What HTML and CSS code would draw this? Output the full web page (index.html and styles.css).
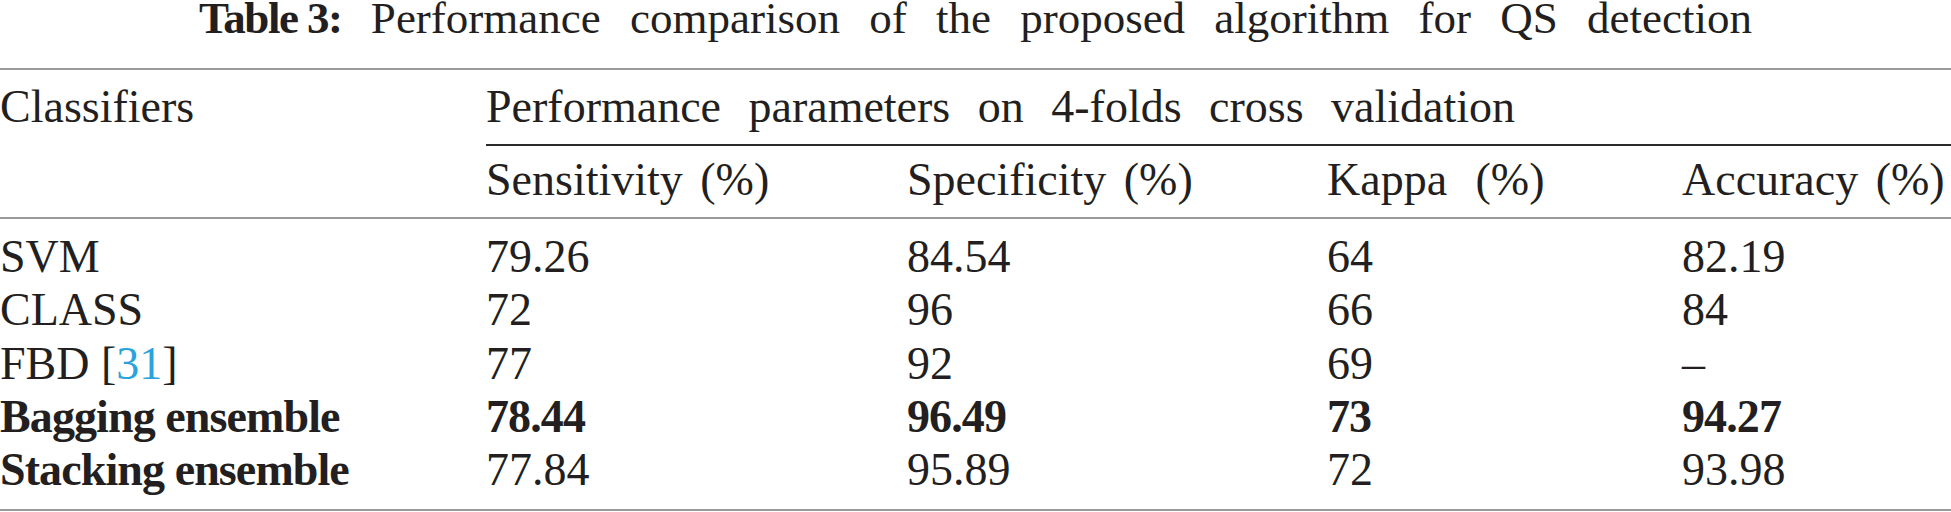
FILE: index.html
```html
<!DOCTYPE html>
<html lang="en">
<head>
    <meta charset="UTF-8">
    <meta name="viewport" content="width=device-width, initial-scale=1.0">
    <title>Table 3: Performance comparison</title>
    <link rel="stylesheet" href="styles.css">
</head>
<body>
    <h1 class="caption"><b>Table 3:</b> Performance comparison of the proposed algorithm for QS detection</h1>
    <table class="results">
        <colgroup>
            <col class="c1">
            <col class="c2">
            <col class="c3">
            <col class="c4">
            <col>
        </colgroup>
        <thead>
            <tr class="head-top">
                <th rowspan="2" class="classifiers">Classifiers</th>
                <th colspan="4" class="group">Performance parameters on 4-folds cross validation</th>
            </tr>
            <tr class="head-sub">
                <th>Sensitivity (%)</th>
                <th>Specificity (%)</th>
                <th class="wide">Kappa (%)</th>
                <th>Accuracy (%)</th>
            </tr>
        </thead>
        <tbody>
            <tr>
                <td>SVM</td><td>79.26</td><td>84.54</td><td>64</td><td>82.19</td>
            </tr>
            <tr>
                <td>CLASS</td><td>72</td><td>96</td><td>66</td><td>84</td>
            </tr>
            <tr>
                <td>FBD [<a class="ref" href="#">31</a>]</td><td>77</td><td>92</td><td>69</td><td>&ndash;</td>
            </tr>
            <tr class="best">
                <td>Bagging ensemble</td><td>78.44</td><td>96.49</td><td>73</td><td>94.27</td>
            </tr>
            <tr>
                <td class="strong">Stacking ensemble</td><td>77.84</td><td>95.89</td><td>72</td><td>93.98</td>
            </tr>
        </tbody>
    </table>
</body>
</html>
```

FILE: styles.css
```css
body {
    margin: 0;
    background: #fff;
    color: #231f20;
    font-family: "Liberation Serif", "Times New Roman", serif;
}
.caption {
    margin: 0 0 32px;
    font-size: 45px;
    font-weight: normal;
    line-height: 36px;
    text-align: center;
    word-spacing: 18px;
}
.caption b {
    letter-spacing: -1.5px;
    word-spacing: 0;
}
.results {
    width: 100%;
    table-layout: fixed;
    border-collapse: separate;
    border-spacing: 0;
    font-size: 46px;
    line-height: 53.3px;
}
.c1 { width: 486px; }
.c2 { width: 421px; }
.c3 { width: 420px; }
.c4 { width: 355px; }
th, td {
    padding: 0;
    text-align: left;
    font-weight: normal;
    white-space: nowrap;
}
.head-top th {
    border-top: 2px solid #9a9a9a;
    line-height: 54px;
    padding-top: 9.5px;
}
.classifiers {
    vertical-align: top;
    border-bottom: 2px solid #9a9a9a;
}
.group {
    padding-bottom: 10.5px;
    border-bottom: 2px solid #2b2b2b;
    word-spacing: 16px;
}
.head-sub th {
    line-height: 54px;
    padding-top: 6.5px;
    padding-bottom: 10.5px;
    border-bottom: 2px solid #9a9a9a;
    word-spacing: 6px;
}
.head-sub .wide {
    word-spacing: 17px;
}
tbody tr:first-child td {
    padding-top: 11px;
}
tbody tr:last-child td {
    padding-bottom: 12.5px;
    border-bottom: 2px solid #9a9a9a;
}
.best td,
.strong {
    font-weight: bold;
    letter-spacing: -0.9px;
}
.ref {
    color: #29a3dc;
    text-decoration: none;
}
```
